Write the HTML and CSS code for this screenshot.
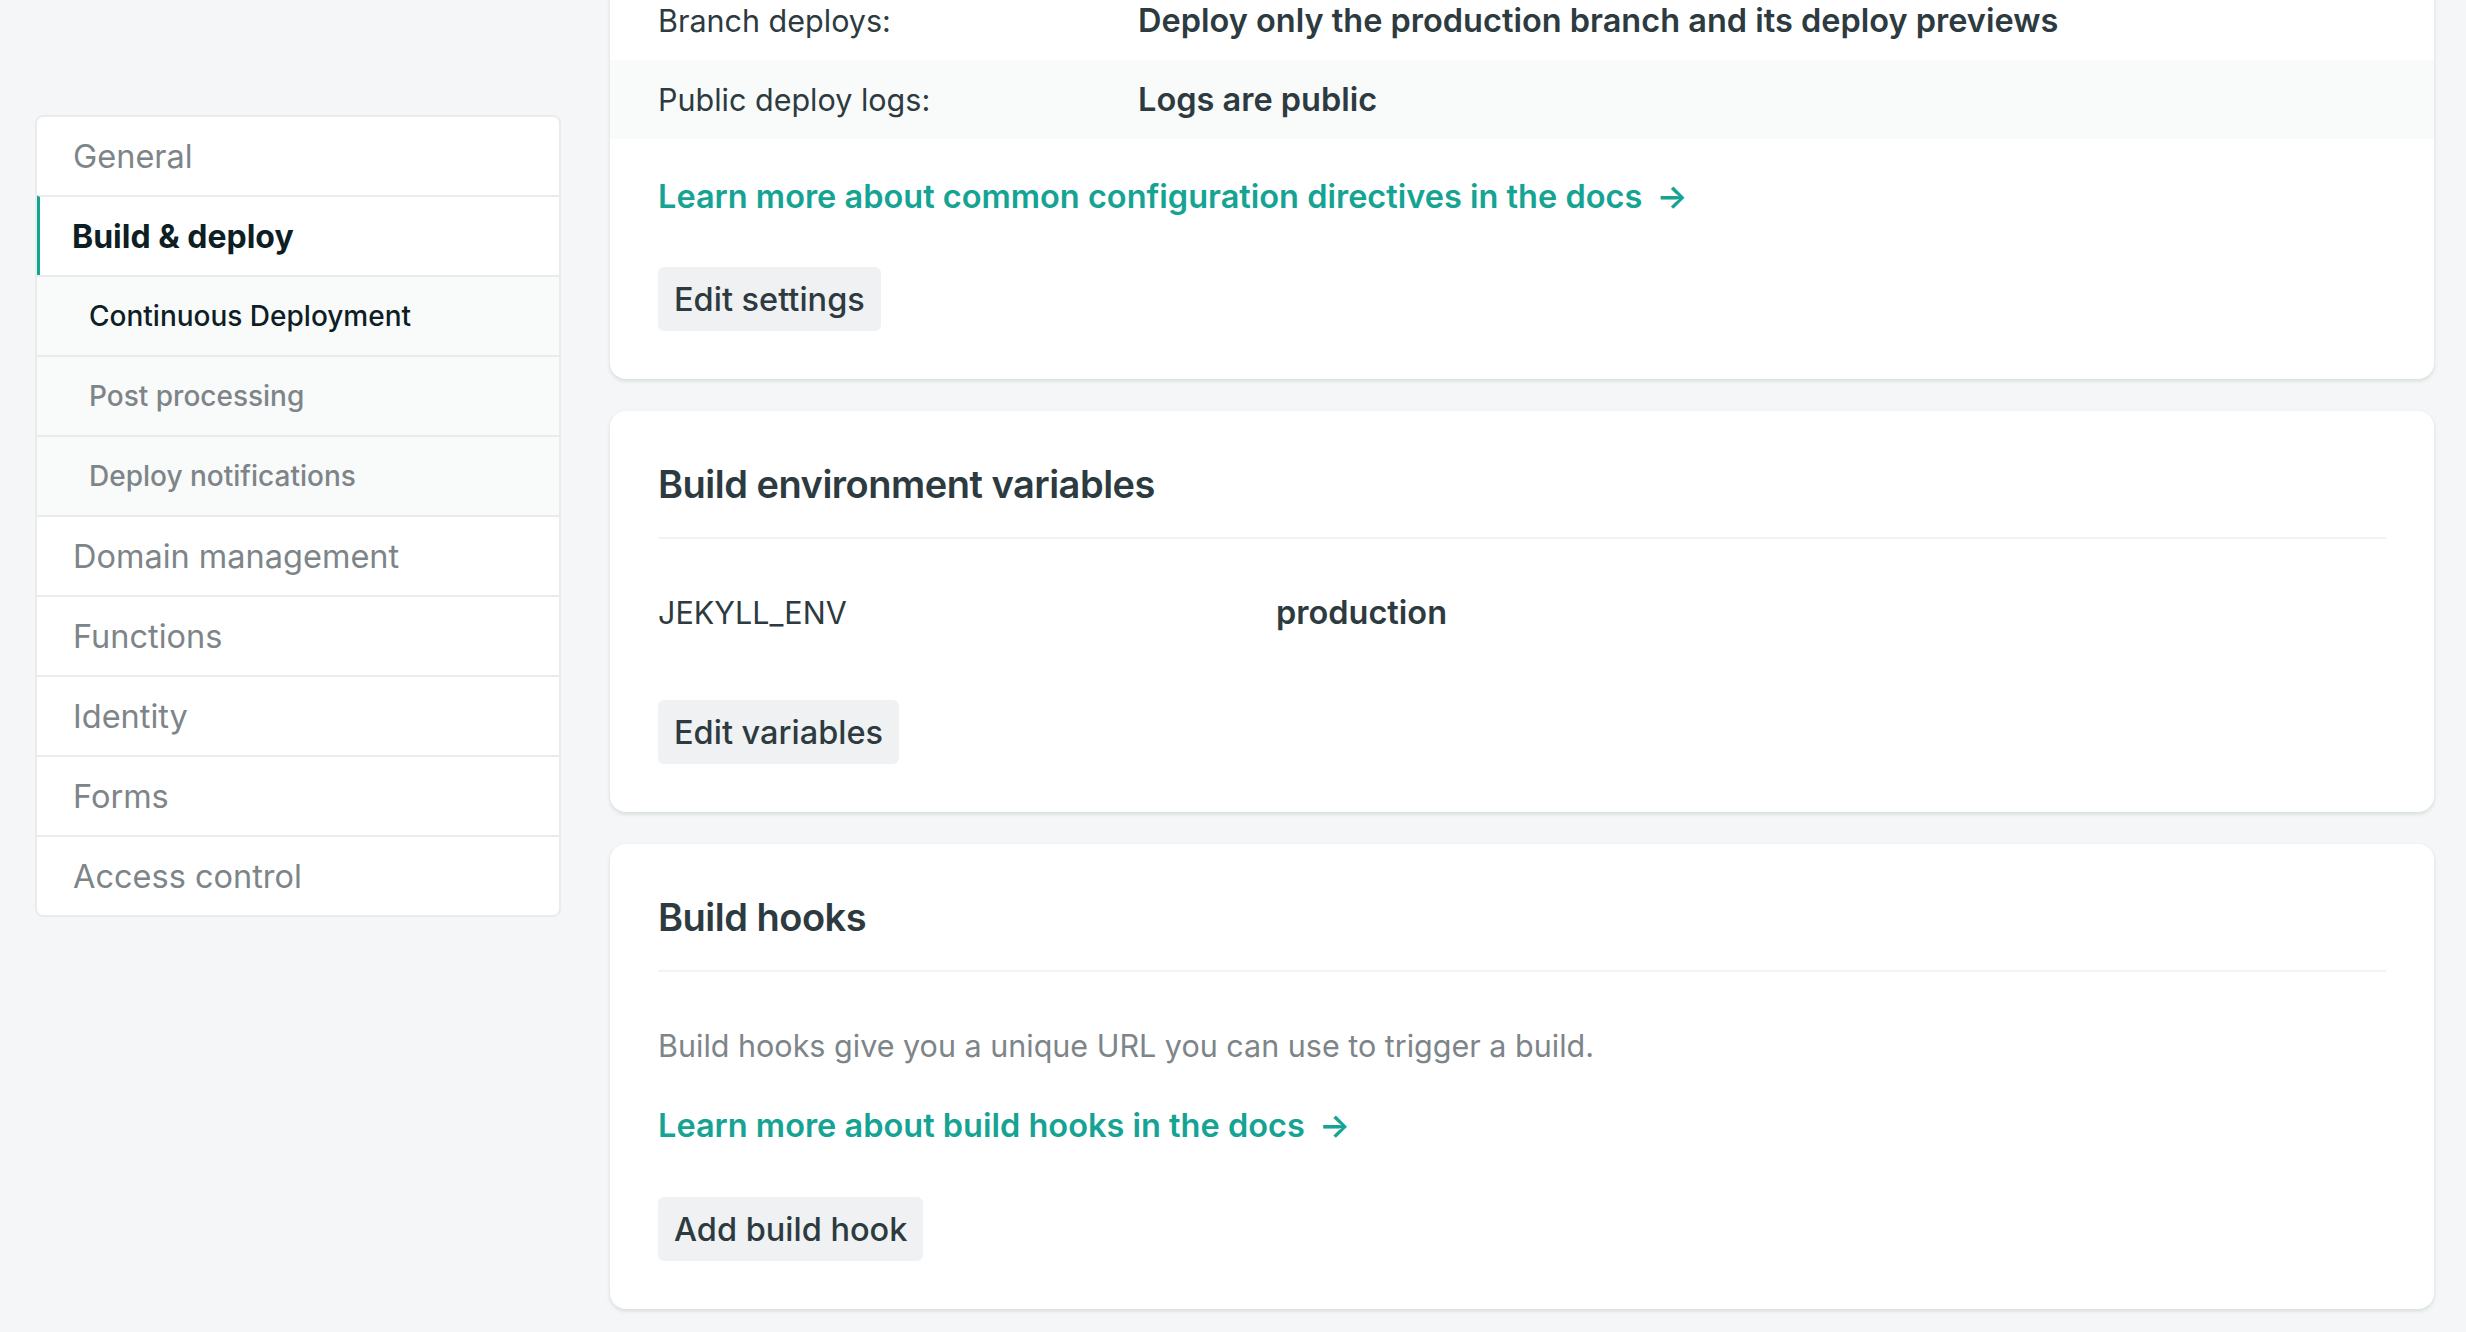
FILE: index.html
```html
<!DOCTYPE html>
<html lang="en">
<head>
<meta charset="utf-8">
<title>Build &amp; deploy settings</title>
<link rel="stylesheet" href="styles.css">
</head>
<body>
<div class="layout">
  <nav class="sidenav">
    <a class="nav-item">General</a>
    <a class="nav-item active">Build &amp; deploy</a>
    <a class="nav-sub current">Continuous Deployment</a>
    <a class="nav-sub">Post processing</a>
    <a class="nav-sub">Deploy notifications</a>
    <a class="nav-item">Domain management</a>
    <a class="nav-item">Functions</a>
    <a class="nav-item">Identity</a>
    <a class="nav-item">Forms</a>
    <a class="nav-item">Access control</a>
  </nav>
  <main class="content">
    <section class="card card-first">
      <dl class="settings">
        <div class="setting-row">
          <dt>Branch deploys:</dt>
          <dd>Deploy only the production branch and its deploy previews</dd>
        </div>
        <div class="setting-row alt">
          <dt>Public deploy logs:</dt>
          <dd>Logs are public</dd>
        </div>
      </dl>
      <div class="card-body first-body">
        <p class="doc-link"><a>Learn more about common configuration directives in the docs <span class="arrow">→</span></a></p>
        <button class="btn">Edit settings</button>
      </div>
    </section>

    <section class="card">
      <header class="card-header"><h2>Build environment variables</h2></header>
      <div class="card-body">
        <div class="env-row">
          <span class="env-key">JEKYLL_ENV</span>
          <span class="env-val">production</span>
        </div>
        <button class="btn btn-env">Edit variables</button>
      </div>
    </section>

    <section class="card">
      <header class="card-header"><h2>Build hooks</h2></header>
      <div class="card-body">
        <p class="desc">Build hooks give you a unique URL you can use to trigger a build.</p>
        <p class="doc-link hooks-link"><a>Learn more about build hooks in the docs <span class="arrow">→</span></a></p>
        <button class="btn">Add build hook</button>
      </div>
    </section>
  </main>
</div>
</body>
</html>
```
FILE: styles.css
```css
* { box-sizing: border-box; }

html, body {
  margin: 0;
  padding: 0;
  background: #f4f6f7;
  font-family: Inter, "Noto Sans", "Liberation Sans", sans-serif;
  color: #2d3b41;
  -webkit-font-smoothing: antialiased;
}

.layout {
  display: flex;
  align-items: flex-start;
  gap: 49px;
  padding: 0 32px 0 35px;
}

/* Sidebar */
.sidenav {
  flex: 0 0 526px;
  margin-top: 115px;
  background: #ffffff;
  border: 2px solid #e9ebed;
  border-radius: 8px;
  display: flex;
  flex-direction: column;
  overflow: hidden;
}

.nav-item,
.nav-sub {
  display: flex;
  align-items: center;
  height: 80px;
  border-top: 2px solid #e9ebed;
  padding-left: 36px;
  color: #7d8589;
  text-decoration: none;
}

.nav-item:first-child {
  height: 78px;
  border-top: 0;
}

.nav-item {
  font-size: 32.5px;
  font-weight: 400;
}

.nav-item.active {
  color: #0e1e25;
  font-size: 32px;
  font-weight: 700;
  border-left: 4px solid #15a394;
  padding-left: 32px;
  margin-left: -1px;
}

.nav-sub {
  background: #f9fafa;
  font-size: 28px;
  font-weight: 500;
  padding-left: 52px;
}

.nav-sub.current {
  color: #0e1e25;
}

/* Content */
.content {
  flex: 1 1 auto;
  display: flex;
  flex-direction: column;
  gap: 32px;
  margin-top: -19px;
  padding-bottom: 25px;
}

.card {
  background: #ffffff;
  border-radius: 16px;
  box-shadow: 0 2px 4px rgba(14, 30, 37, 0.12);
}

.card-first {
  border-top-left-radius: 0;
  border-top-right-radius: 0;
}

.settings {
  margin: 0;
}

.setting-row {
  display: flex;
  align-items: center;
  height: 79px;
  padding: 0 48px;
  line-height: 48px;
}

.setting-row.alt {
  background: #f9fafa;
}

.setting-row dt {
  flex: 0 0 480px;
  font-size: 30.5px;
  font-weight: 400;
  color: #2d3b41;
}

.setting-row dd {
  margin: 0;
  font-size: 32.5px;
  font-weight: 600;
  color: #2d3b41;
}

.card-header {
  margin: 0 48px;
  padding-top: 49px;
  padding-bottom: 29px;
  border-bottom: 2px solid #f2f3f4;
}

.card-header h2 {
  margin: 0;
  font-size: 38px;
  line-height: 48px;
  font-weight: 600;
  color: #2d3b41;
  letter-spacing: -0.5px;
}

.card-body {
  padding: 50px 48px 48px;
  display: flex;
  flex-direction: column;
  align-items: flex-start;
}

.first-body {
  padding-top: 34px;
}

.doc-link {
  margin: 0 0 46px;
  font-size: 32.5px;
  line-height: 48px;
  font-weight: 600;
}

.doc-link a {
  color: #15a394;
  text-decoration: none;
}

.arrow {
  margin-left: 6px;
}

.hooks-link {
  margin-bottom: 47px;
}

.desc {
  margin: 0 0 32px;
  font-size: 30.5px;
  line-height: 48px;
  color: #7d8589;
}

.env-row {
  display: flex;
  align-items: center;
  height: 48px;
  line-height: 48px;
  margin-bottom: 63px;
}

.env-key {
  flex: 0 0 618px;
  font-size: 30.5px;
  color: #2d3b41;
}

.env-val {
  font-size: 32.5px;
  font-weight: 600;
  color: #2d3b41;
}

.btn {
  height: 64px;
  padding: 0 16px;
  border: 0;
  border-radius: 6px;
  background: #eff1f2;
  font-family: inherit;
  font-size: 32.5px;
  font-weight: 500;
  color: #2d3b41;
  cursor: pointer;
}
```
